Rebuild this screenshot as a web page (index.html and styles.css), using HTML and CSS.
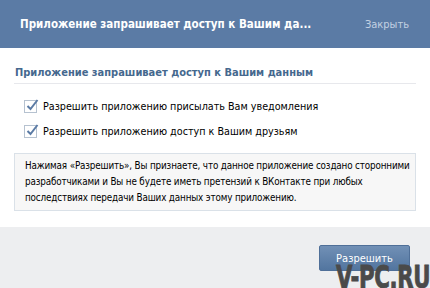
FILE: index.html
```html
<!DOCTYPE html>
<html lang="ru">
<head>
    <meta charset="UTF-8">
    <meta name="viewport" content="width=device-width, initial-scale=1.0">
    <title>Запрос доступа</title>
    <link rel="stylesheet" href="styles.css">
</head>
<body>
    <div id="box">
        <div class="head">
            <span class="head-title">Приложение запрашивает доступ к Вашим да...</span>
            <span class="close">Закрыть</span>
        </div>
        <div class="content">
            <div class="section-title">Приложение запрашивает доступ к Вашим данным</div>
            <div class="opts">
                <label class="opt"><span class="check"><svg width="14" height="14" viewBox="0 0 14 14"><path d="M2.5 8 L5.5 11 L12.5 2" fill="none" stroke="#5b7ba5" stroke-width="2"/></svg></span>Разрешить приложению присылать Вам уведомления</label>
                <label class="opt"><span class="check"><svg width="14" height="14" viewBox="0 0 14 14"><path d="M2.5 8 L5.5 11 L12.5 2" fill="none" stroke="#5b7ba5" stroke-width="2"/></svg></span>Разрешить приложению доступ к Вашим друзьям</label>
            </div>
            <div class="note">
                Нажимая «Разрешить», Вы признаете, что данное приложение создано сторонними<br>
                разработчиками и Вы не будете иметь претензий к ВКонтакте при любых<br>
                последствиях передачи Ваших данных этому приложению.
            </div>
        </div>
        <div class="foot">
            <button class="btn">Разрешить</button>
        </div>
        <div class="mark">V-PC.RU</div>
    </div>
</body>
</html>
```

FILE: styles.css
```css
body{
    margin: 0;
    font-family: 'DejaVu Sans Condensed', 'DejaVu Sans', Tahoma, sans-serif;
    background-color: #edeef0;
}
#box{
    position: relative;
    width: 430px;
    height: 288px;
    overflow: hidden;
    background-color: #edeef0;
}
.head{
    height: 48px;
    background-color: #5b7ba5;
    display: flex;
    align-items: center;
    justify-content: space-between;
    padding: 0 21px 0 20px;
}
.head-title{
    color: #fff;
    font-weight: bold;
    font-size: 11.5px;
}
.close{
    color: #c3d1e2;
    font-size: 11px;
}
.content{
    background-color: #fff;
    padding: 18px 14px 16px 14px;
}
.section-title{
    color: #45688e;
    font-weight: bold;
    font-size: 11px;
    line-height: 13px;
    padding: 0 0 4px 1px;
    border-bottom: 1px solid #e7e8ec;
}
.opts{
    padding: 16px 0 15px 10px;
    display: flex;
    flex-direction: column;
    gap: 12px;
}
.opt{
    display: flex;
    align-items: center;
    height: 13px;
    font-size: 10.7px;
    color: #000;
}
.check{
    flex: none;
    width: 11px;
    height: 11px;
    border: 1px solid #b6c2d0;
    background-color: #fff;
    margin-right: 6px;
    position: relative;
}
.check svg{
    position: absolute;
    left: 0;
    top: -3px;
}
.note{
    background-color: #f7f7f7;
    border: 1px solid #dae1e8;
    padding: 4px 6px 4px 10px;
    font-size: 9.8px;
    letter-spacing: -0.15px;
    line-height: 16px;
    white-space: nowrap;
    overflow: hidden;
    color: #000;
}
.foot{
    display: flex;
    justify-content: flex-end;
    padding: 18px 20px 0 0;
}
.btn{
    width: 91px;
    height: 26px;
    border: 1px solid #4f6f98;
    border-radius: 2px;
    background: linear-gradient(#7190b6, #52759f);
    color: #fff;
    font-family: 'DejaVu Sans Condensed', 'DejaVu Sans', sans-serif;
    font-size: 11px;
    padding: 0;
}
.mark{
    position: absolute;
    right: 0;
    top: 262px;
    font-family: 'DejaVu Sans Condensed', 'DejaVu Sans', sans-serif;
    font-weight: bold;
    font-size: 32px;
    line-height: 30px;
    color: #4a4a4a;
    letter-spacing: -0.5px;
    -webkit-text-stroke: 0.8px #4a4a4a;
    transform: scaleX(0.74);
    transform-origin: right top;
}
```
